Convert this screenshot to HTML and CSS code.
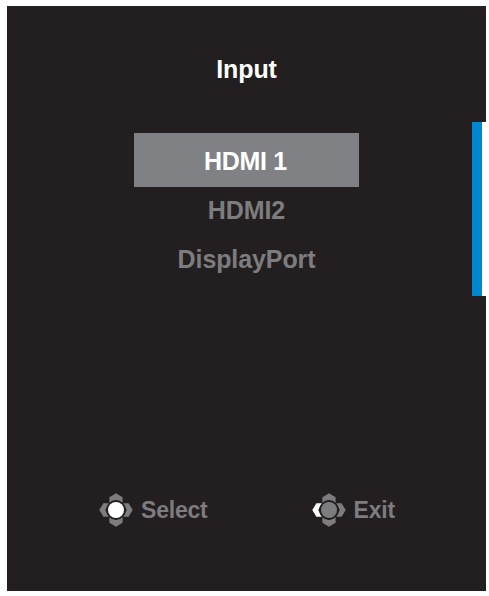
FILE: index.html
```
<!DOCTYPE html>
<html lang="en">
<head>
    <meta charset="UTF-8">
    <meta name="viewport" content="width=device-width, initial-scale=1.0">
    <title>Input</title>
    <link rel="stylesheet" href="styles.css">
</head>
<body>
    <div class="panel">
        <div class="content">
            <div class="title">Input</div>
            <div class="menu">
                <div class="item selected">HDMI 1</div>
                <div class="item">HDMI2</div>
                <div class="item">DisplayPort</div>
            </div>
            <div class="footer">
                <div class="hint select">
                    <svg class="joystick" viewBox="0 0 34 34">
                        <polygon points="17,0.3 23.6,4.2 23.6,11 17,7 10.4,11 10.4,4.2"/>
                        <polygon points="17,33.7 23.6,29.8 23.6,23 17,27 10.4,23 10.4,29.8"/>
                        <polygon class="left" points="0.3,17 4.4,10.2 10,10.2 6.2,17 10,23.8 4.4,23.8"/>
                        <polygon points="33.7,17 29.6,10.2 24,10.2 27.8,17 24,23.8 29.6,23.8"/>
                        <circle class="ring" cx="17" cy="17" r="9.9"/>
                        <circle class="center" cx="17" cy="17" r="8"/>
                    </svg>
                    <span>Select</span>
                </div>
                <div class="hint exit">
                    <svg class="joystick" viewBox="0 0 34 34">
                        <polygon points="17,0.3 23.6,4.2 23.6,11 17,7 10.4,11 10.4,4.2"/>
                        <polygon points="17,33.7 23.6,29.8 23.6,23 17,27 10.4,23 10.4,29.8"/>
                        <polygon class="left" points="0.3,17 4.4,10.2 10,10.2 6.2,17 10,23.8 4.4,23.8"/>
                        <polygon points="33.7,17 29.6,10.2 24,10.2 27.8,17 24,23.8 29.6,23.8"/>
                        <circle class="ring" cx="17" cy="17" r="9.9"/>
                        <circle class="center" cx="17" cy="17" r="8"/>
                    </svg>
                    <span>Exit</span>
                </div>
            </div>
        </div>
        <div class="scrollbar"></div>
    </div>
</body>
</html>
```
FILE: styles.css
```
body {
    margin: 0;
    padding: 6px 3px 5px 7px;
    box-sizing: border-box;
    height: 100vh;
    background-color: #ffffff;
    font-family: "Liberation Sans", Arial, sans-serif;
    font-weight: bold;
}
.panel {
    display: flex;
    height: 585px;
    background-color: #231f20;
}
.content {
    width: 465px;
    display: flex;
    flex-direction: column;
}
.title {
    margin-top: 48px;
    padding-left: 14px;
    line-height: 30px;
    font-size: 25px;
    letter-spacing: -0.1px;
    text-align: center;
    color: #ffffff;
}
.menu {
    width: 225px;
    margin: 49px 0 0 127px;
}
.item {
    height: 49px;
    line-height: 47px;
    font-size: 25px;
    letter-spacing: -0.1px;
    text-align: center;
    color: #7d7c7e;
}
.item.selected {
    height: 54px;
    padding-right: 2px;
    box-sizing: border-box;
    line-height: 56px;
    letter-spacing: -0.3px;
    color: #ffffff;
    background-color: #808184;
}
.footer {
    display: flex;
    gap: 104px;
    margin: auto 0 64px 92px;
}
.hint {
    display: flex;
    align-items: center;
    gap: 8px;
    font-size: 23px;
    letter-spacing: -0.2px;
    line-height: 34px;
    color: #7d7c7e;
}
.joystick {
    width: 34px;
    height: 34px;
    fill: #7d7c7e;
}
.joystick .ring {
    fill: #231f20;
}
.select .center,
.exit .left {
    fill: #ffffff;
}
.scrollbar {
    box-sizing: border-box;
    width: 14px;
    height: 174px;
    margin-top: 116px;
    background-color: #0087cf;
    border-right: 4px solid #ffffff;
}
```
